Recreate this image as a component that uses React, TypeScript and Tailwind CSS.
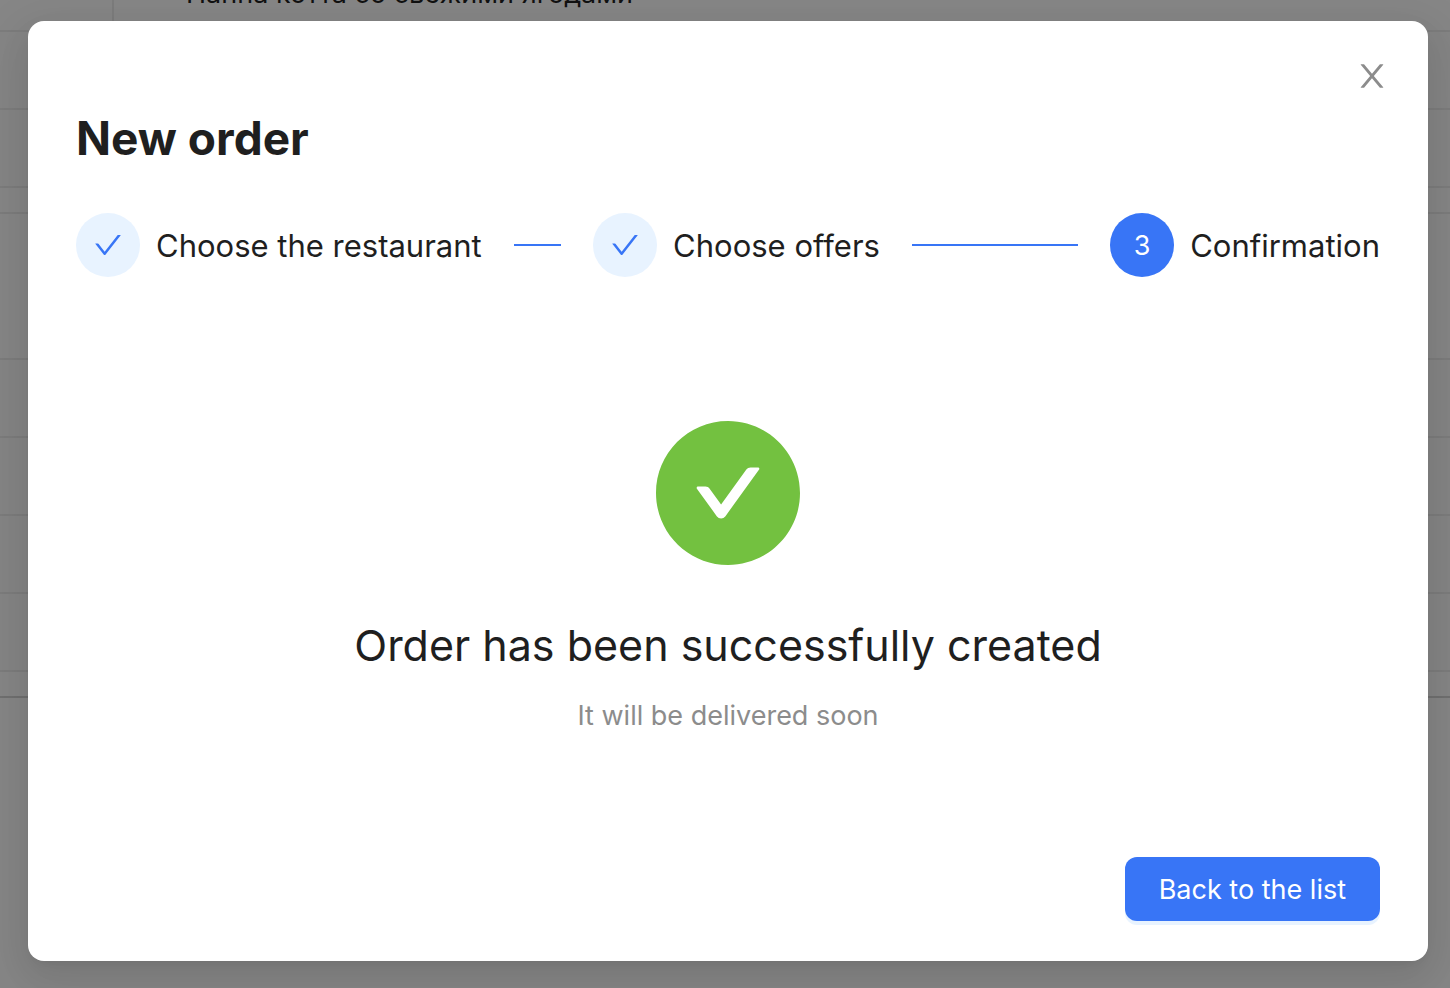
import React from "react";

const CHECK =
  "M912 190h-69.9c-9.8 0-19.1 4.5-25.1 12.2L404.7 724.5 207 474a32 32 0 0 0-25.1-12.2H112c-6.7 0-10.4 7.7-6.3 12.9l273.9 347c12.8 16.2 37.4 16.2 50.3 0l488.4-618.9c4.1-5.1.4-12.8-6.3-12.8z";
const CLOSE =
  "M563.8 512l262.5-312.9c4.4-5.2.7-13.1-6.1-13.1h-79.8c-4.7 0-9.2 2.1-12.3 5.7L511.6 449.8 295.1 191.7c-3-3.6-7.5-5.7-12.3-5.7H203c-6.8 0-10.5 7.9-6.1 13.1L459.4 512 196.9 824.9A7.95 7.95 0 0 0 203 838h79.8c4.7 0 9.2-2.1 12.3-5.7l216.5-258.1 216.5 258.1c3 3.6 7.5 5.7 12.3 5.7h79.8c6.8 0 10.5-7.9 6.1-13.1L563.8 512z";
const CHECK_CIRCLE =
  "M512 64C264.6 64 64 264.6 64 512s200.6 448 448 448 448-200.6 448-448S759.4 64 512 64zm193.5 301.7l-210.6 292a31.8 31.8 0 0 1-51.7 0L318.5 484.9c-3.8-5.3 0-12.7 6.5-12.7h46.9c10.2 0 19.9 4.9 25.9 13.3l71.2 98.8 157.2-218c6-8.3 15.6-13.3 25.9-13.3H699c6.5 0 10.3 7.4 6.5 12.7z";

function Icon({ d, className }: { d: string; className: string }) {
  return (
    <svg viewBox="64 64 896 896" fill="currentColor" className={className} aria-hidden="true">
      <path d={d} />
    </svg>
  );
}

type StepProps = { number: number; title: string; done?: boolean; last?: boolean };

function Step({ number, title, done, last }: StepProps) {
  return (
    <li
      className={last ? "flex items-center gap-4" : "flex flex-1 items-center gap-4"}
      aria-current={done ? undefined : "step"}
    >
      <span
        className={
          done
            ? "flex size-16 shrink-0 items-center justify-center rounded-full bg-[#e8f3ff] text-[#3875f6]"
            : "flex size-16 shrink-0 items-center justify-center rounded-full bg-[#3875f6] pt-0.5 text-[27px] text-white"
        }
      >
        {done ? <Icon d={CHECK} className="size-7" /> : number}
      </span>
      <span className="pt-0.5 text-[31px] leading-12 whitespace-nowrap">{title}</span>
      {!last && <span className="mx-4 h-0.5 flex-1 bg-[#3875f6]" />}
    </li>
  );
}

function OrdersBackdrop() {
  return (
    <div aria-hidden="true">
      <div className="flex h-8 border-b-2 border-[#e2e2e2]">
        <div className="w-28 shrink-0" />
        <div className="flex items-end border-l-2 border-[#e2e2e2] pb-5 pl-18 text-[27px] leading-8">
          <span className="whitespace-nowrap">Панна котта со свежими ягодами</span>
        </div>
      </div>
      <div className="h-[78px] border-b-2 border-[#e2e2e2] bg-[#f2f2f2]" />
      <div className="h-[78px] border-b-2 border-[#e2e2e2] bg-[#f2f2f2]" />
      <div className="h-[26px] border-b-2 border-[#e2e2e2]" />
      <div className="h-[146px] border-b-2 border-[#e2e2e2]" />
      <div className="h-[78px] border-b-2 border-[#e2e2e2] bg-[#f2f2f2]" />
      <div className="h-[78px] border-b-2 border-[#e2e2e2] bg-[#f2f2f2]" />
      <div className="h-[78px] border-b-2 border-[#e2e2e2] bg-[#f2f2f2]" />
      <div className="h-[78px] border-b-2 border-[#e2e2e2] bg-[#f2f2f2]" />
      <div className="h-[26px] border-b-2 border-[#cccccc]" />
    </div>
  );
}

export default function App() {
  return (
    <div className="relative min-h-screen overflow-hidden bg-[#f5f5f5] font-['Inter',sans-serif] text-[#1f1f1f]">
      <OrdersBackdrop />
      <div className="absolute inset-0 flex bg-black/45 pt-[21px] pr-[22px] pb-[27px] pl-7">
        <section
          role="dialog"
          aria-modal="true"
          aria-labelledby="dialog-title"
          className="flex flex-1 flex-col rounded-2xl bg-white px-12 pt-[31px] pb-10 shadow-[0_12px_32px_rgba(0,0,0,0.08),0_6px_12px_-8px_rgba(0,0,0,0.12),0_18px_56px_16px_rgba(0,0,0,0.05)]"
        >
          <button
            type="button"
            aria-label="Close"
            className="-mr-4 flex size-12 items-center justify-center self-end text-[#8c8c8c]"
          >
            <Icon d={CLOSE} className="size-8" />
          </button>
          <h1 id="dialog-title" className="mt-[10px] text-[46px] leading-14 font-bold">
            New order
          </h1>
          <ol className="mt-[47px] flex gap-4">
            <Step number={1} title="Choose the restaurant" done />
            <Step number={2} title="Choose offers" done />
            <Step number={3} title="Confirmation" last />
          </ol>
          <div className="flex flex-1 flex-col items-center pt-36 text-center">
            <Icon d={CHECK_CIRCLE} className="size-36 text-[#73c140]" />
            <h2 className="mt-12 text-[43px] leading-16">Order has been successfully created</h2>
            <p className="mt-[17px] text-[27px] leading-11 text-[#8c8c8c]">It will be delivered soon</p>
          </div>
          <button
            type="button"
            className="h-16 self-end rounded-xl bg-[#3875f6] px-[34px] pt-0.5 text-[27px] text-white shadow-[0_4px_0_#e8f3ff]"
          >
            Back to the list
          </button>
        </section>
      </div>
    </div>
  );
}
